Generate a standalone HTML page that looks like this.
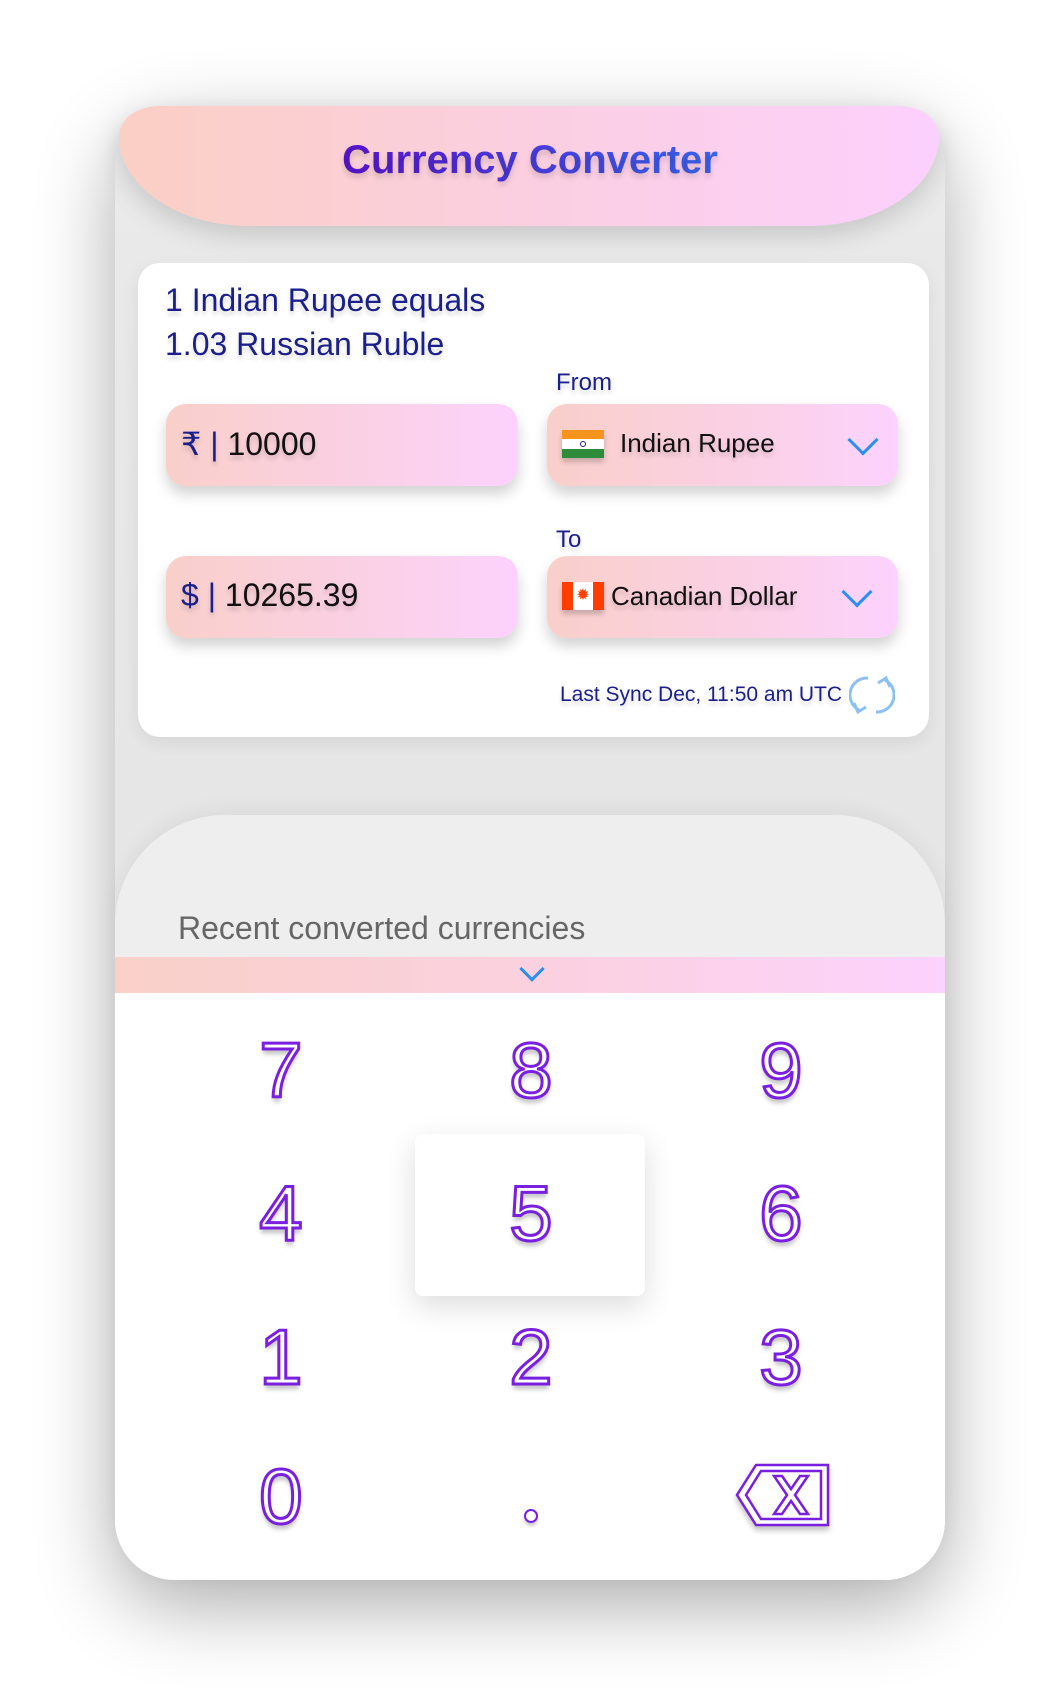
<!DOCTYPE html>
<html><head><meta charset="utf-8"><style>
*{margin:0;padding:0;box-sizing:border-box}
body{width:1060px;height:1705px;background:#fff;font-family:"Liberation Sans",sans-serif;position:relative;overflow:hidden}
.phone{position:absolute;left:115px;top:108px;width:830px;height:1472px;border-radius:60px;background:linear-gradient(180deg,#eaeaea,#e6e6e6 50%,#ececec);box-shadow:0 25px 80px rgba(0,0,0,.33)}
.hdr{position:absolute;left:119px;top:106px;width:820px;height:120px;border-radius:40px 40px 130px 130px / 30px 30px 90px 90px;background:linear-gradient(90deg,#fbcfc4,#fbcfe6 60%,#fcd0fd);box-shadow:0 10px 25px rgba(0,0,0,.15)}
.title{position:absolute;left:0;width:1060px;top:138px;text-align:center;font-size:40px;font-weight:bold;color:#4f2ae0;text-shadow:0 4px 6px rgba(0,0,0,.15)}
.title span{background:linear-gradient(90deg,#5a14d0,#3a66f2);-webkit-background-clip:text;color:transparent}
.card{position:absolute;left:138px;top:263px;width:791px;height:474px;background:#fff;border-radius:22px;box-shadow:0 6px 18px rgba(0,0,0,.08)}
.t{position:absolute;color:#1a1f8c;text-shadow:0 4px 4px rgba(0,0,0,.15)}
.box{position:absolute;height:82px;border-radius:20px;background:linear-gradient(90deg,#f9cfca,#fbd1ec 70%,#fcd2fe);box-shadow:0 8px 14px rgba(0,0,0,.18)}
.chev{position:absolute;width:22px;height:22px;border-right:3px solid #2a8ff0;border-bottom:3px solid #2a8ff0;transform:rotate(45deg)}
.bottom{position:absolute;left:115px;top:815px;width:830px;height:765px;border-radius:110px 110px 60px 60px;background:#eeeeee;overflow:hidden;box-shadow:0 -6px 20px rgba(0,0,0,.05)}
.strip{position:absolute;left:0;top:142px;width:830px;height:36px;background:linear-gradient(90deg,#fad0c8,#fbd1e4 60%,#fcd2fe)}
.pad{position:absolute;left:0;top:178px;width:830px;height:587px;background:#fff}
.d{position:absolute;width:120px;margin-left:-60px;text-align:center;font-size:78px;line-height:80px;color:#fff;-webkit-text-stroke:3px #7a1ee0;text-shadow:0 5px 5px rgba(0,0,0,.25);font-family:"Liberation Sans",sans-serif}
</style></head><body>
<div class="phone"></div>
<div class="hdr"></div>
<div class="title"><span>Currency Converter</span></div>
<div class="card"></div>
<div class="t" style="left:165px;top:278px;font-size:32px;line-height:44px">1 Indian Rupee equals<br>1.03 Russian Ruble</div>
<div class="t" style="left:556px;top:369px;font-size:24px">From</div>
<div class="t" style="left:556px;top:526px;font-size:24px">To</div>
<div class="box" style="left:166px;top:404px;width:352px"></div>
<div class="box" style="left:547px;top:404px;width:351px"></div>
<div class="box" style="left:166px;top:556px;width:352px"></div>
<div class="box" style="left:547px;top:556px;width:351px"></div>
<div class="t" style="left:181px;top:425px;font-size:32px;color:#111">
<span style="color:#1a1f8c">₹ | </span>10000</div>
<div class="t" style="left:181px;top:577px;font-size:32px;color:#111"><span style="color:#1a1f8c">$ | </span>10265.39</div>
<div style="position:absolute;left:562px;top:430px;width:42px;height:28px;box-shadow:0 4px 5px rgba(0,0,0,.2)">
<div style="height:9px;background:#f7941d"></div><div style="height:10px;background:#fff;position:relative"><div style="position:absolute;left:18px;top:2px;width:6px;height:6px;border:1px solid #1a1f8c;border-radius:50%"></div></div><div style="height:9px;background:#2e8b3a"></div></div>
<div class="t" style="left:620px;top:428px;font-size:26px;color:#111">Indian Rupee</div>
<div class="chev" style="left:852px;top:429px"></div>
<div style="position:absolute;left:562px;top:582px;width:42px;height:28px;display:flex;box-shadow:0 4px 5px rgba(0,0,0,.2)">
<div style="width:11px;background:#ff3d00"></div><div style="width:20px;background:#fff;color:#ff3d00;font-size:16px;text-align:center;line-height:28px">✹</div><div style="width:11px;background:#ff3d00"></div></div>
<div class="t" style="left:611px;top:581px;font-size:26px;color:#111">Canadian Dollar</div>
<div class="chev" style="left:846px;top:581px"></div>
<div class="t" style="left:560px;top:683px;font-size:21px">Last Sync Dec, 11:50 am UTC</div>
<svg style="position:absolute;left:849px;top:672px" width="46" height="46" viewBox="0 0 46 46" fill="none" stroke="#8cc0ef" stroke-width="3">
<path d="M19 6 A17 17 0 0 0 10 38"/><path d="M5 31 L9 40 L17 35"/><path d="M27 40 A17 17 0 0 0 36 8"/><path d="M41 15 L37 6 L29 11"/></svg>
<div class="bottom">
<div class="t" style="left:63px;top:95px;font-size:32px;color:#666;text-shadow:none">Recent converted currencies</div>
<div class="strip"></div>
<div class="chev" style="left:408px;top:145px;width:18px;height:18px"></div>
<div class="pad"></div>
<div style="position:absolute;left:300px;top:319px;width:230px;height:162px;background:#fff;border-radius:8px;box-shadow:0 10px 30px rgba(0,0,0,.14)"></div>
</div>
<div class="d" style="left:281px;top:1030px">7</div>
<div class="d" style="left:531px;top:1030px">8</div>
<div class="d" style="left:781px;top:1030px">9</div>
<div class="d" style="left:281px;top:1173px">4</div>
<div class="d" style="left:531px;top:1173px">5</div>
<div class="d" style="left:781px;top:1173px">6</div>
<div class="d" style="left:281px;top:1317px">1</div>
<div class="d" style="left:531px;top:1317px">2</div>
<div class="d" style="left:781px;top:1317px">3</div>
<div class="d" style="left:281px;top:1456px">0</div>
<div style="position:absolute;left:524px;top:1509px;width:14px;height:14px;border:2.5px solid #7a1ee0;border-radius:50%;box-shadow:0 3px 3px rgba(0,0,0,.2)"></div>
<svg style="position:absolute;left:734px;top:1462px;filter:drop-shadow(0 4px 3px rgba(0,0,0,.25))" width="98" height="66" viewBox="0 0 98 66" fill="#fff" stroke="#7a1ee0" stroke-width="2.5">
<path d="M22 3 H94 V63 H22 L3 33 Z"/><path d="M27 9 H87 V57 H27 L12 33 Z"/>
<path d="M40 14 L48 14 L57 27 L66 14 L74 14 L61 33 L74 52 L66 52 L57 39 L48 52 L40 52 L53 33 Z"/></svg>
</body></html>
